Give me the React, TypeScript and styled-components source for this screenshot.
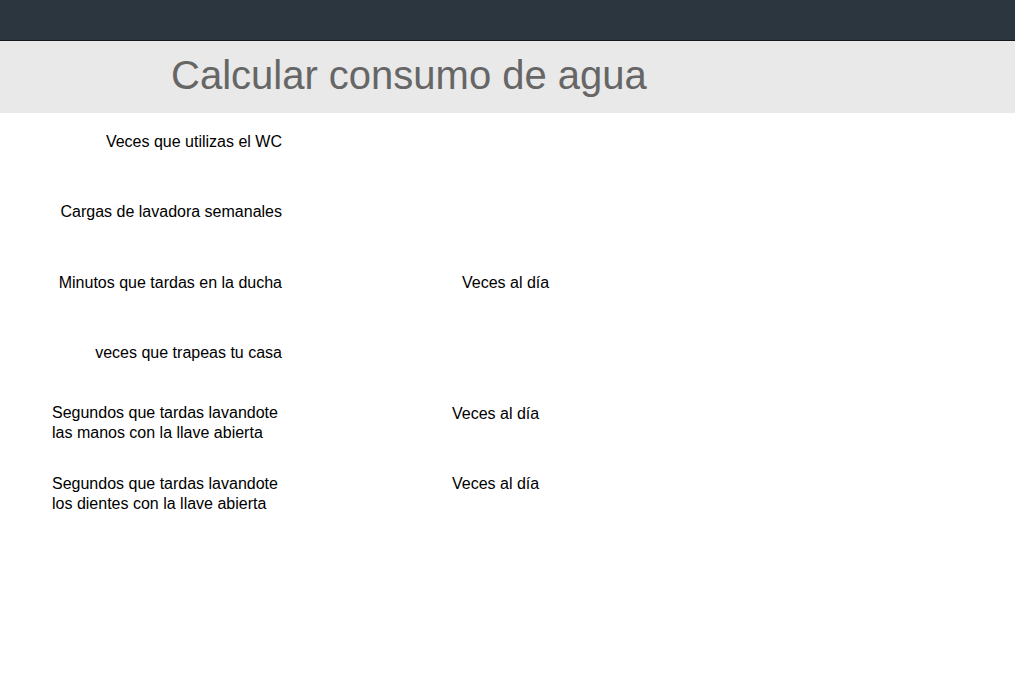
import styled, { createGlobalStyle } from 'styled-components'

const GlobalStyle = createGlobalStyle`
  html, body {
    margin: 0;
    padding: 0;
    background: #ffffff;
    font-family: "Liberation Sans", Arial, sans-serif;
  }
`

const NavBar = styled.nav`
  height: 40px;
  background-color: #2c363e;
  border-bottom: 1px solid #141a1e;
`

const Header = styled.header`
  height: 72px;
  background-color: #e9e9e9;
  display: flex;
  align-items: center;
  padding-left: 171px;
`

const Title = styled.h1`
  margin: 0;
  font-size: 40px;
  font-weight: 400;
  color: #666666;
  line-height: 1;
  padding-bottom: 4px;
`

const Form = styled.main`
  padding-top: 20px;
  display: flex;
  flex-direction: column;
`

const Row = styled.div<{ $h: number }>`
  display: flex;
  align-items: flex-start;
  height: ${({ $h }) => $h}px;
  color: #000000;
  font-size: 16px;
`

const Label = styled.label`
  width: 282px;
  text-align: right;
  line-height: 18px;
`

const LongLabel = styled.label`
  width: 230px;
  padding-left: 52px;
  line-height: 20px;
  text-align: left;
`

const Extra = styled.span<{ $offset: number; $top?: number }>`
  margin-left: ${({ $offset }) => $offset}px;
  margin-top: ${({ $top = 0 }) => $top}px;
  line-height: 18px;
`

const App = () => {
  return (
    <>
      <GlobalStyle />
      <NavBar />
      <Header>
        <Title>Calcular consumo de agua</Title>
      </Header>
      <Form>
        <Row $h={70}>
          <Label>Veces que utilizas el WC</Label>
        </Row>
        <Row $h={71}>
          <Label>Cargas de lavadora semanales</Label>
        </Row>
        <Row $h={70}>
          <Label>Minutos que tardas en la ducha</Label>
          <Extra $offset={180}>Veces al día</Extra>
        </Row>
        <Row $h={59}>
          <Label>veces que trapeas tu casa</Label>
        </Row>
        <Row $h={71}>
          <LongLabel>Segundos que tardas lavandote las manos con la llave abierta</LongLabel>
          <Extra $offset={170} $top={2}>Veces al día</Extra>
        </Row>
        <Row $h={71}>
          <LongLabel>Segundos que tardas lavandote los dientes con la llave abierta</LongLabel>
          <Extra $offset={170} $top={1}>Veces al día</Extra>
        </Row>
      </Form>
    </>
  )
}

export default App
